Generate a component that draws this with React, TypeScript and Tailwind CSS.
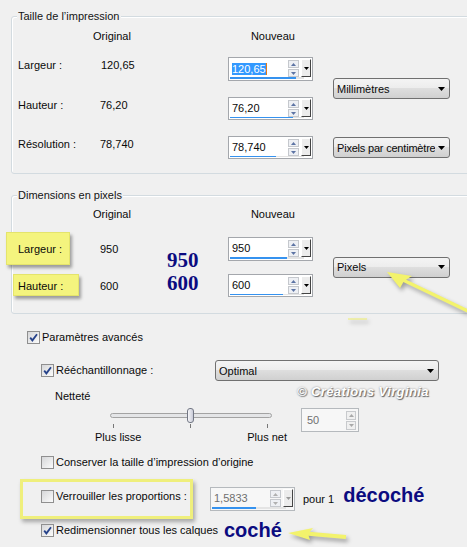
import { clsx } from 'clsx';

const navy = 'text-[#0b0b80]';

function CheckBox({ checked = false }: { checked?: boolean }) {
  return (
    <span className="flex h-[13px] w-[13px] shrink-0 items-center justify-center border border-[#8f8f8f] bg-[linear-gradient(135deg,#d6d7d9,#fbfbfb)]">
      {checked && (
        <svg width="9" height="9" viewBox="0 0 9 9">
          <path d="M1.2 4.6 L3.4 7.4 L8 1.2" fill="none" stroke="#26428a" strokeWidth="1.8" />
        </svg>
      )}
    </span>
  );
}

function Spinner({ disabled = false }: { disabled?: boolean }) {
  const c = disabled ? '#b0b0b0' : '#5d74a4';
  return (
    <div className="flex w-[11px] shrink-0 flex-col gap-px">
      <span className="flex h-[8px] items-center justify-center border border-[#c5c8cd] bg-[#eef0f4]">
        <svg width="5" height="3" viewBox="0 0 5 3">
          <path d="M0 3 L2.5 0 L5 3Z" fill={c} />
        </svg>
      </span>
      <span className="flex h-[8px] items-center justify-center border border-[#c5c8cd] bg-[#eef0f4]">
        <svg width="5" height="3" viewBox="0 0 5 3">
          <path d="M0 0 L5 0 L2.5 3Z" fill={c} />
        </svg>
      </span>
    </div>
  );
}

function DropBtn({ disabled = false }: { disabled?: boolean }) {
  return (
    <span className="ml-[2px] mr-px mt-px flex h-[18px] w-[10px] shrink-0 items-center justify-center border border-l-white border-t-white border-r-[#444] border-b-[#444] bg-[#ececec]">
      <svg width="5" height="3" viewBox="0 0 5 3">
        <path d="M0 0 L5 0 L2.5 3Z" fill={disabled ? '#9a9a9a' : '#000'} />
      </svg>
    </span>
  );
}

function SpinField({
  value,
  bar,
  selected = false,
  disabled = false,
}: {
  value: string;
  bar: number;
  selected?: boolean;
  disabled?: boolean;
}) {
  return (
    <div
      className={clsx(
        'flex h-full w-[85px] flex-col border',
        disabled ? 'border-[#b5b9bd] bg-[#f7f7f7] text-[#6f6f6f]' : 'border-[#a4a7ac] bg-white'
      )}
    >
      <div className="flex flex-1 items-start">
        <div className="flex-1 pl-[3px] pt-[3px] leading-[14px]">
          {selected ? <span className="bg-[#3399ff] text-white">{value}</span> : value}
          {selected && <span className="inline-block h-[12px] w-px translate-y-[2px] bg-[#e07b1a]" />}
        </div>
        <div className="mt-[2px]">
          <Spinner disabled={disabled} />
        </div>
        <DropBtn disabled={disabled} />
      </div>
      <div className="mb-px ml-px mr-[8px] h-[3px] bg-[#e4e4e4]">
        <div className="h-full bg-[#3592ef]" style={{ width: bar }} />
      </div>
    </div>
  );
}

function Combo({ label, className }: { label: string; className?: string }) {
  return (
    <div
      className={clsx(
        'flex h-[21px] items-center rounded-[3px] border border-[#707070] bg-[linear-gradient(#f4f4f4_0%,#ececec_50%,#dedede_50%,#d0d0d0_100%)] pl-[3px] pr-[4px]',
        className
      )}
    >
      <span className="flex-1 overflow-hidden whitespace-nowrap leading-[14px]">{label}</span>
      <svg width="7" height="4" viewBox="0 0 7 4" className="ml-[3px] shrink-0">
        <path d="M0 0H7L3.5 4Z" fill="#000" />
      </svg>
    </div>
  );
}

function Group({ title, className, children }: { title: string; className: string; children: React.ReactNode }) {
  return (
    <div
      className={clsx(
        'relative ml-[11px] w-[470px] rounded-[3px] border border-[#d3dbe0] shadow-[inset_1px_1px_0_#fff]',
        className
      )}
    >
      <span className="absolute -top-[9px] left-[5px] bg-[#f0f0f0] px-px leading-[16px] text-[#141414]">{title}</span>
      {children}
    </div>
  );
}

export default function App() {
  return (
    <div className="relative h-[547px] w-[467px] overflow-hidden bg-[#f0f0f0] font-['Liberation_Sans',Arial,sans-serif] text-[11px] text-[#0a0a0a]">
      {/* Taille de l'impression */}
      <Group title="Taille de l’impression" className="mt-[16px] h-[158px]">
        <div className="pl-[6px] pt-[11px]">
          <div className="flex h-[16px] leading-[16px]">
            <span className="ml-[75px]">Original</span>
            <span className="ml-[120px]">Nouveau</span>
          </div>
          <div className="mt-[13px] grid grid-cols-[82px_128px_85px_20px_117px] grid-rows-[24px_23px_23px] gap-y-[16px] leading-[16px]">
            <span className="col-start-1 row-start-1 self-start">Largeur :</span>
            <span className="col-start-2 row-start-1 self-start pl-[1px]">120,65</span>
            <div className="col-start-3 row-start-1">
              <SpinField value="120,65" bar={66} selected />
            </div>
            <Combo label="Millimètres" className="col-start-5 row-span-2 row-start-1 self-center" />

            <span className="col-start-1 row-start-2 self-start">Hauteur :</span>
            <span className="col-start-2 row-start-2 self-start">76,20</span>
            <div className="col-start-3 row-start-2">
              <SpinField value="76,20" bar={63} />
            </div>

            <span className="col-start-1 row-start-3 self-start">Résolution :</span>
            <span className="col-start-2 row-start-3 self-start">78,740</span>
            <div className="col-start-3 row-start-3">
              <SpinField value="78,740" bar={46} />
            </div>
            <Combo label="Pixels par centimètre" className="col-start-5 row-start-3 self-center tracking-[-0.2px]" />
          </div>
        </div>
      </Group>

      {/* Dimensions en pixels */}
      <Group title="Dimensions en pixels" className="mt-[21px] h-[119px]">
        <div className="pl-[6px] pt-[10px]">
          <div className="flex h-[16px] leading-[16px]">
            <span className="ml-[75px]">Original</span>
            <span className="ml-[120px]">Nouveau</span>
          </div>
          <div className="mt-[15px] grid grid-cols-[82px_128px_85px_20px_117px] grid-rows-[24px_23px] gap-y-[13px] leading-[16px]">
            <div className="relative col-start-1 row-start-1 self-center">
              <div className="absolute -left-[12px] -top-[9px] h-[33px] w-[64px] border border-[#e4e46c] bg-[#f4f47e] shadow-[2px_3px_3px_rgba(0,0,0,0.35)]" />
              <span className="relative">Largeur :</span>
            </div>
            <span className="col-start-2 row-start-1 self-center">950</span>
            <div className="col-start-3 row-start-1">
              <SpinField value="950" bar={57} />
            </div>
            <Combo label="Pixels" className="col-start-5 row-span-2 row-start-1 self-center" />

            <div className="relative col-start-1 row-start-2 self-center">
              <div className="absolute -left-[5px] -top-[4px] h-[22px] w-[66px] border border-[#e4e46c] bg-[#f4f47e] shadow-[2px_3px_3px_rgba(0,0,0,0.35)]" />
              <span className="relative">Hauteur :</span>
            </div>
            <span className="col-start-2 row-start-2 self-center">600</span>
            <div className="col-start-3 row-start-2">
              <SpinField value="600" bar={53} />
            </div>
          </div>
        </div>
      </Group>

      {/* Paramètres avancés */}
      <div className="ml-[27px] mt-[15px] flex h-[16px] items-center gap-[2px]">
        <CheckBox checked />
        <span>Paramètres avancés</span>
      </div>

      <div className="ml-[41px] mt-[15px] flex h-[21px] items-center">
        <div className="flex w-[174px] items-center gap-[2px]">
          <CheckBox checked />
          <span>Rééchantillonnage :</span>
        </div>
        <Combo label="Optimal" className="w-[224px]" />
      </div>

      <div className="ml-[55px] mt-[7px] h-[16px] leading-[16px]">Netteté</div>

      <div className="mt-[4px] flex items-start">
        <div className="ml-[95px] w-[192px]">
          <div className="relative flex h-[15px] items-center">
            <div className="ml-[15px] h-[5px] w-[162px] rounded-full border border-[#a3a3a3] bg-[#e4e5e7]" />
            <div className="absolute left-[92px] top-0 h-[15px] w-[7px] rounded-[3px] border border-[#727784] bg-[linear-gradient(90deg,#f6f6f8,#c9cbd8)]" />
          </div>
          <div className="ml-[18px] mt-px flex w-[155px] justify-between">
            <span className="h-[4px] w-px bg-[#777]" />
            <span className="h-[4px] w-px bg-[#777]" />
            <span className="h-[4px] w-px bg-[#777]" />
          </div>
          <div className="mt-[2px] flex justify-between leading-[14px]">
            <span>Plus lisse</span>
            <span>Plus net</span>
          </div>
        </div>
        <div className="ml-[14px] flex h-[24px] w-[58px] items-center border border-[#b5b9bd] bg-[#f7f7f7] pl-[5px] pr-[2px] text-[#707070]">
          <span className="flex-1">50</span>
          <div className="flex w-[10px] flex-col gap-px">
            <span className="flex h-[9px] items-center justify-center border border-[#c8cacd] bg-[#f0f0f0]">
              <svg width="5" height="3" viewBox="0 0 5 3">
                <path d="M0 3 L2.5 0 L5 3Z" fill="#a9a9a9" />
              </svg>
            </span>
            <span className="flex h-[9px] items-center justify-center border border-[#c8cacd] bg-[#f0f0f0]">
              <svg width="5" height="3" viewBox="0 0 5 3">
                <path d="M0 0 L5 0 L2.5 3Z" fill="#a9a9a9" />
              </svg>
            </span>
          </div>
        </div>
      </div>

      <div className="ml-[41px] mt-[10px] flex h-[16px] items-center gap-[2px]">
        <CheckBox />
        <span>Conserver la taille d’impression d’origine</span>
      </div>

      <div className="mt-[9px] flex h-[40px] items-start">
        <div className="ml-[20px] flex h-[40px] w-[173px] items-center gap-[2px] border-[3px] border-[#efef7c] pb-[6px] pl-[18px] shadow-[2px_3px_4px_rgba(0,0,0,0.3)]">
          <CheckBox />
          <span>Verrouiller les proportions :</span>
        </div>
        <div className="ml-[17px] mt-[8px] h-[24px]">
          <SpinField value="1,5833" bar={44} disabled />
        </div>
        <span className="ml-[8px] mt-[12px] leading-[16px]">pour 1</span>
        <span className={clsx('ml-[9px] mt-[4px] text-[20px] font-bold leading-[24px]', navy)}>décoché</span>
      </div>

      <div className="ml-[41px] mt-[3px] flex h-[16px] items-center">
        <div className="flex w-[183px] items-center gap-[2px]">
          <CheckBox checked />
          <span>Redimensionner tous les calques</span>
        </div>
        <span className={clsx('text-[20px] font-bold leading-[16px]', navy)}>coché</span>
      </div>

      {/* annotations */}
      <div className={clsx("absolute left-[167px] top-[249px] font-['Liberation_Serif',serif] text-[21px] font-bold leading-[23px]", navy)}>
        <div>950</div>
        <div>600</div>
      </div>

      <div className="absolute left-[297px] top-[384px] text-[13px] font-bold italic leading-[16px] tracking-[0.4px] text-white [text-shadow:1px_1px_1px_#666,0_0_2px_#888]">
        © Créations Virginia
      </div>

      <svg
        className="pointer-events-none absolute inset-0 drop-shadow-[2px_3px_2px_rgba(0,0,0,0.35)]"
        width="467"
        height="547"
        viewBox="0 0 467 547"
      >
        <line x1="403" y1="280" x2="470" y2="312" stroke="#f3f36c" strokeWidth="3.5" />
        <path d="M387 272 L412 276 L404 281 L400 288Z" fill="#f3f36c" />
        <line x1="306" y1="533.5" x2="346" y2="537" stroke="#f3f36c" strokeWidth="4" />
        <path d="M288 533 L313 528 L308 534 L310 540Z" fill="#f3f36c" />
        <rect x="348" y="318" width="19" height="2" fill="#eeee80" opacity="0.6" />
      </svg>
    </div>
  );
}
